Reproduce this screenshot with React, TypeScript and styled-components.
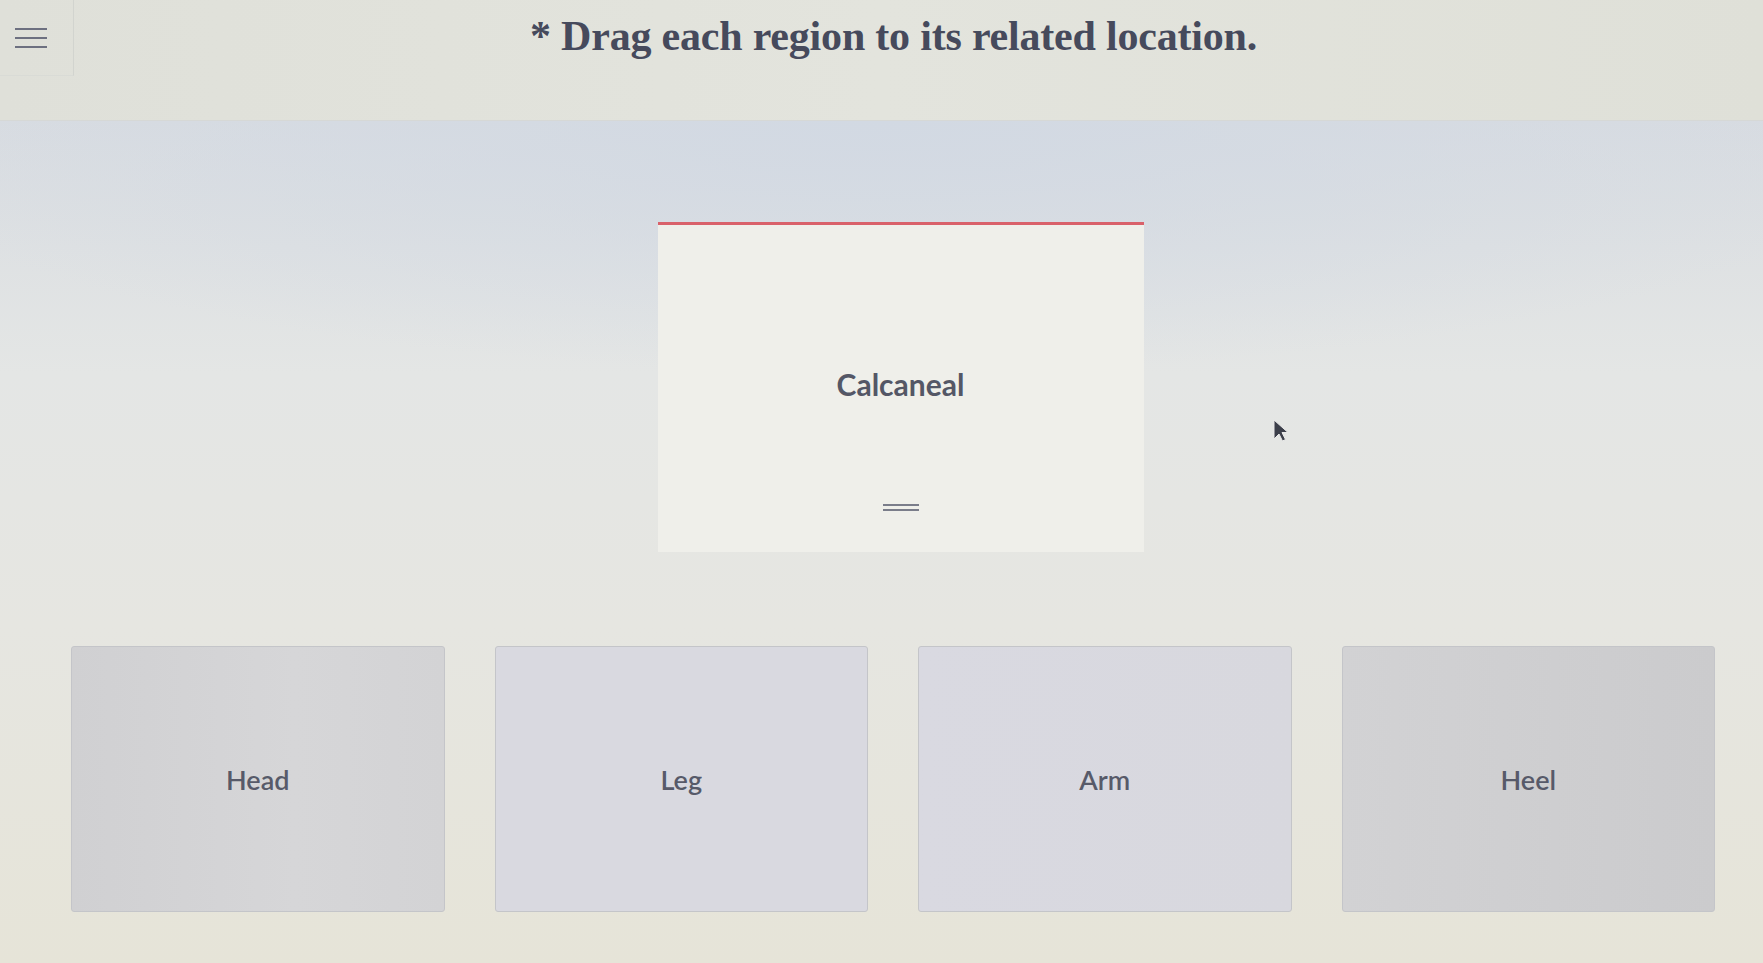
import { createGlobalStyle } from "styled-components";
import styled from "styled-components";

const GlobalStyle = createGlobalStyle`
  html, body {
    margin: 0;
    padding: 0;
  }
  body {
    background: #e4e3da;
    font-family: Lato, "Open Sans", sans-serif;
  }
`;

const Page = styled.div`
  width: 1763px;
  height: 963px;
  display: flex;
  flex-direction: column;
  overflow: hidden;
`;

const Header = styled.header`
  height: 120px;
  display: flex;
  align-items: flex-start;
  background: linear-gradient(90deg, #dfe0d9 0%, #e3e4dd 50%, #dfe0d8 100%);
  border-bottom: 1px solid #d6d8d6;
`;

const MenuButton = styled.button`
  width: 74px;
  height: 76px;
  border: none;
  border-right: 1px solid #d2d4cf;
  border-bottom: 1px solid #d9dbd6;
  background: transparent;
  padding: 0 0 0 14px;
  display: flex;
  align-items: center;
  cursor: pointer;
`;

const Title = styled.h1`
  flex: 1;
  margin: 0;
  padding: 12px 0 0 0;
  text-align: center;
  margin-left: -50px;
  font-family: "Liberation Serif", "DejaVu Serif", serif;
  font-weight: 700;
  font-size: 42px;
  letter-spacing: -0.2px;
  color: #464a5c;
`;

const Main = styled.main`
  flex: 1;
  position: relative;
  display: flex;
  flex-direction: column;
  background:
    radial-gradient(ellipse 60% 30% at 50% 0%, #d2d9e3 0%, rgba(210, 217, 227, 0) 100%),
    linear-gradient(180deg, #d8dce1 0%, #e4e6e5 30%, #e6e6e1 60%, #e6e4d8 100%);
`;

const CardRow = styled.div`
  display: flex;
  justify-content: center;
  padding: 101px 0 0 38px;
`;

const Card = styled.div`
  width: 486px;
  height: 330px;
  box-sizing: border-box;
  border-top: 3px solid #d9616a;
  background: #efefea;
  display: flex;
  flex-direction: column;
  align-items: center;
`;

const CardLabel = styled.div`
  margin-top: 141px;
  font-size: 30px;
  font-weight: 700;
  color: #545766;
`;

const Handle = styled.div`
  margin-top: 102px;
  width: 36px;
  display: flex;
  flex-direction: column;
  gap: 3px;
`;

const HandleLine = styled.span`
  display: block;
  height: 2px;
  background: #7a7d8a;
`;

const Targets = styled.div`
  display: grid;
  grid-template-columns: repeat(4, 1fr);
  gap: 50px;
  padding: 94px 48px 0 71px;
`;

const Target = styled.div<{ $tone: string }>`
  height: 266px;
  box-sizing: border-box;
  border: 1px solid #c4c5c9;
  border-radius: 3px;
  background: ${(p) => p.$tone};
  display: flex;
  align-items: center;
  justify-content: center;
  font-size: 27px;
  font-weight: 600;
  color: #575a69;
`;

const Pointer = styled.svg`
  position: absolute;
  left: 1273px;
  top: 298px;
`;

const targets = [
  { label: "Head", tone: "linear-gradient(90deg, #d0d0d2 0%, #d6d6d8 60%, #d3d3d5 100%)" },
  { label: "Leg", tone: "#d9d9e0" },
  { label: "Arm", tone: "linear-gradient(90deg, #d9d9e1 0%, #d8d8de 100%)" },
  { label: "Heel", tone: "linear-gradient(90deg, #d2d2d4 0%, #cbcbcd 100%)" },
];

export default function App() {
  return (
    <>
      <GlobalStyle />
      <Page>
        <Header>
          <MenuButton aria-label="Menu">
            <svg width="34" height="22" viewBox="0 0 34 22">
              <path d="M1 2h32M1 11h32M1 20h32" stroke="#6d7080" strokeWidth="2.2" />
            </svg>
          </MenuButton>
          <Title>* Drag each region to its related location.</Title>
        </Header>
        <Main>
          <CardRow>
            <Card>
              <CardLabel>Calcaneal</CardLabel>
              <Handle>
                <HandleLine />
                <HandleLine />
              </Handle>
            </Card>
          </CardRow>
          <Targets>
            {targets.map((t) => (
              <Target key={t.label} $tone={t.tone}>
                {t.label}
              </Target>
            ))}
          </Targets>
          <Pointer width="16" height="24" viewBox="0 0 16 24">
            <path d="M1 1v19l5-5 3.5 7 3-1.5-3.5-7H15z" fill="#3c3f4a" stroke="#e8e8e8" strokeWidth="1" />
          </Pointer>
        </Main>
      </Page>
    </>
  );
}
